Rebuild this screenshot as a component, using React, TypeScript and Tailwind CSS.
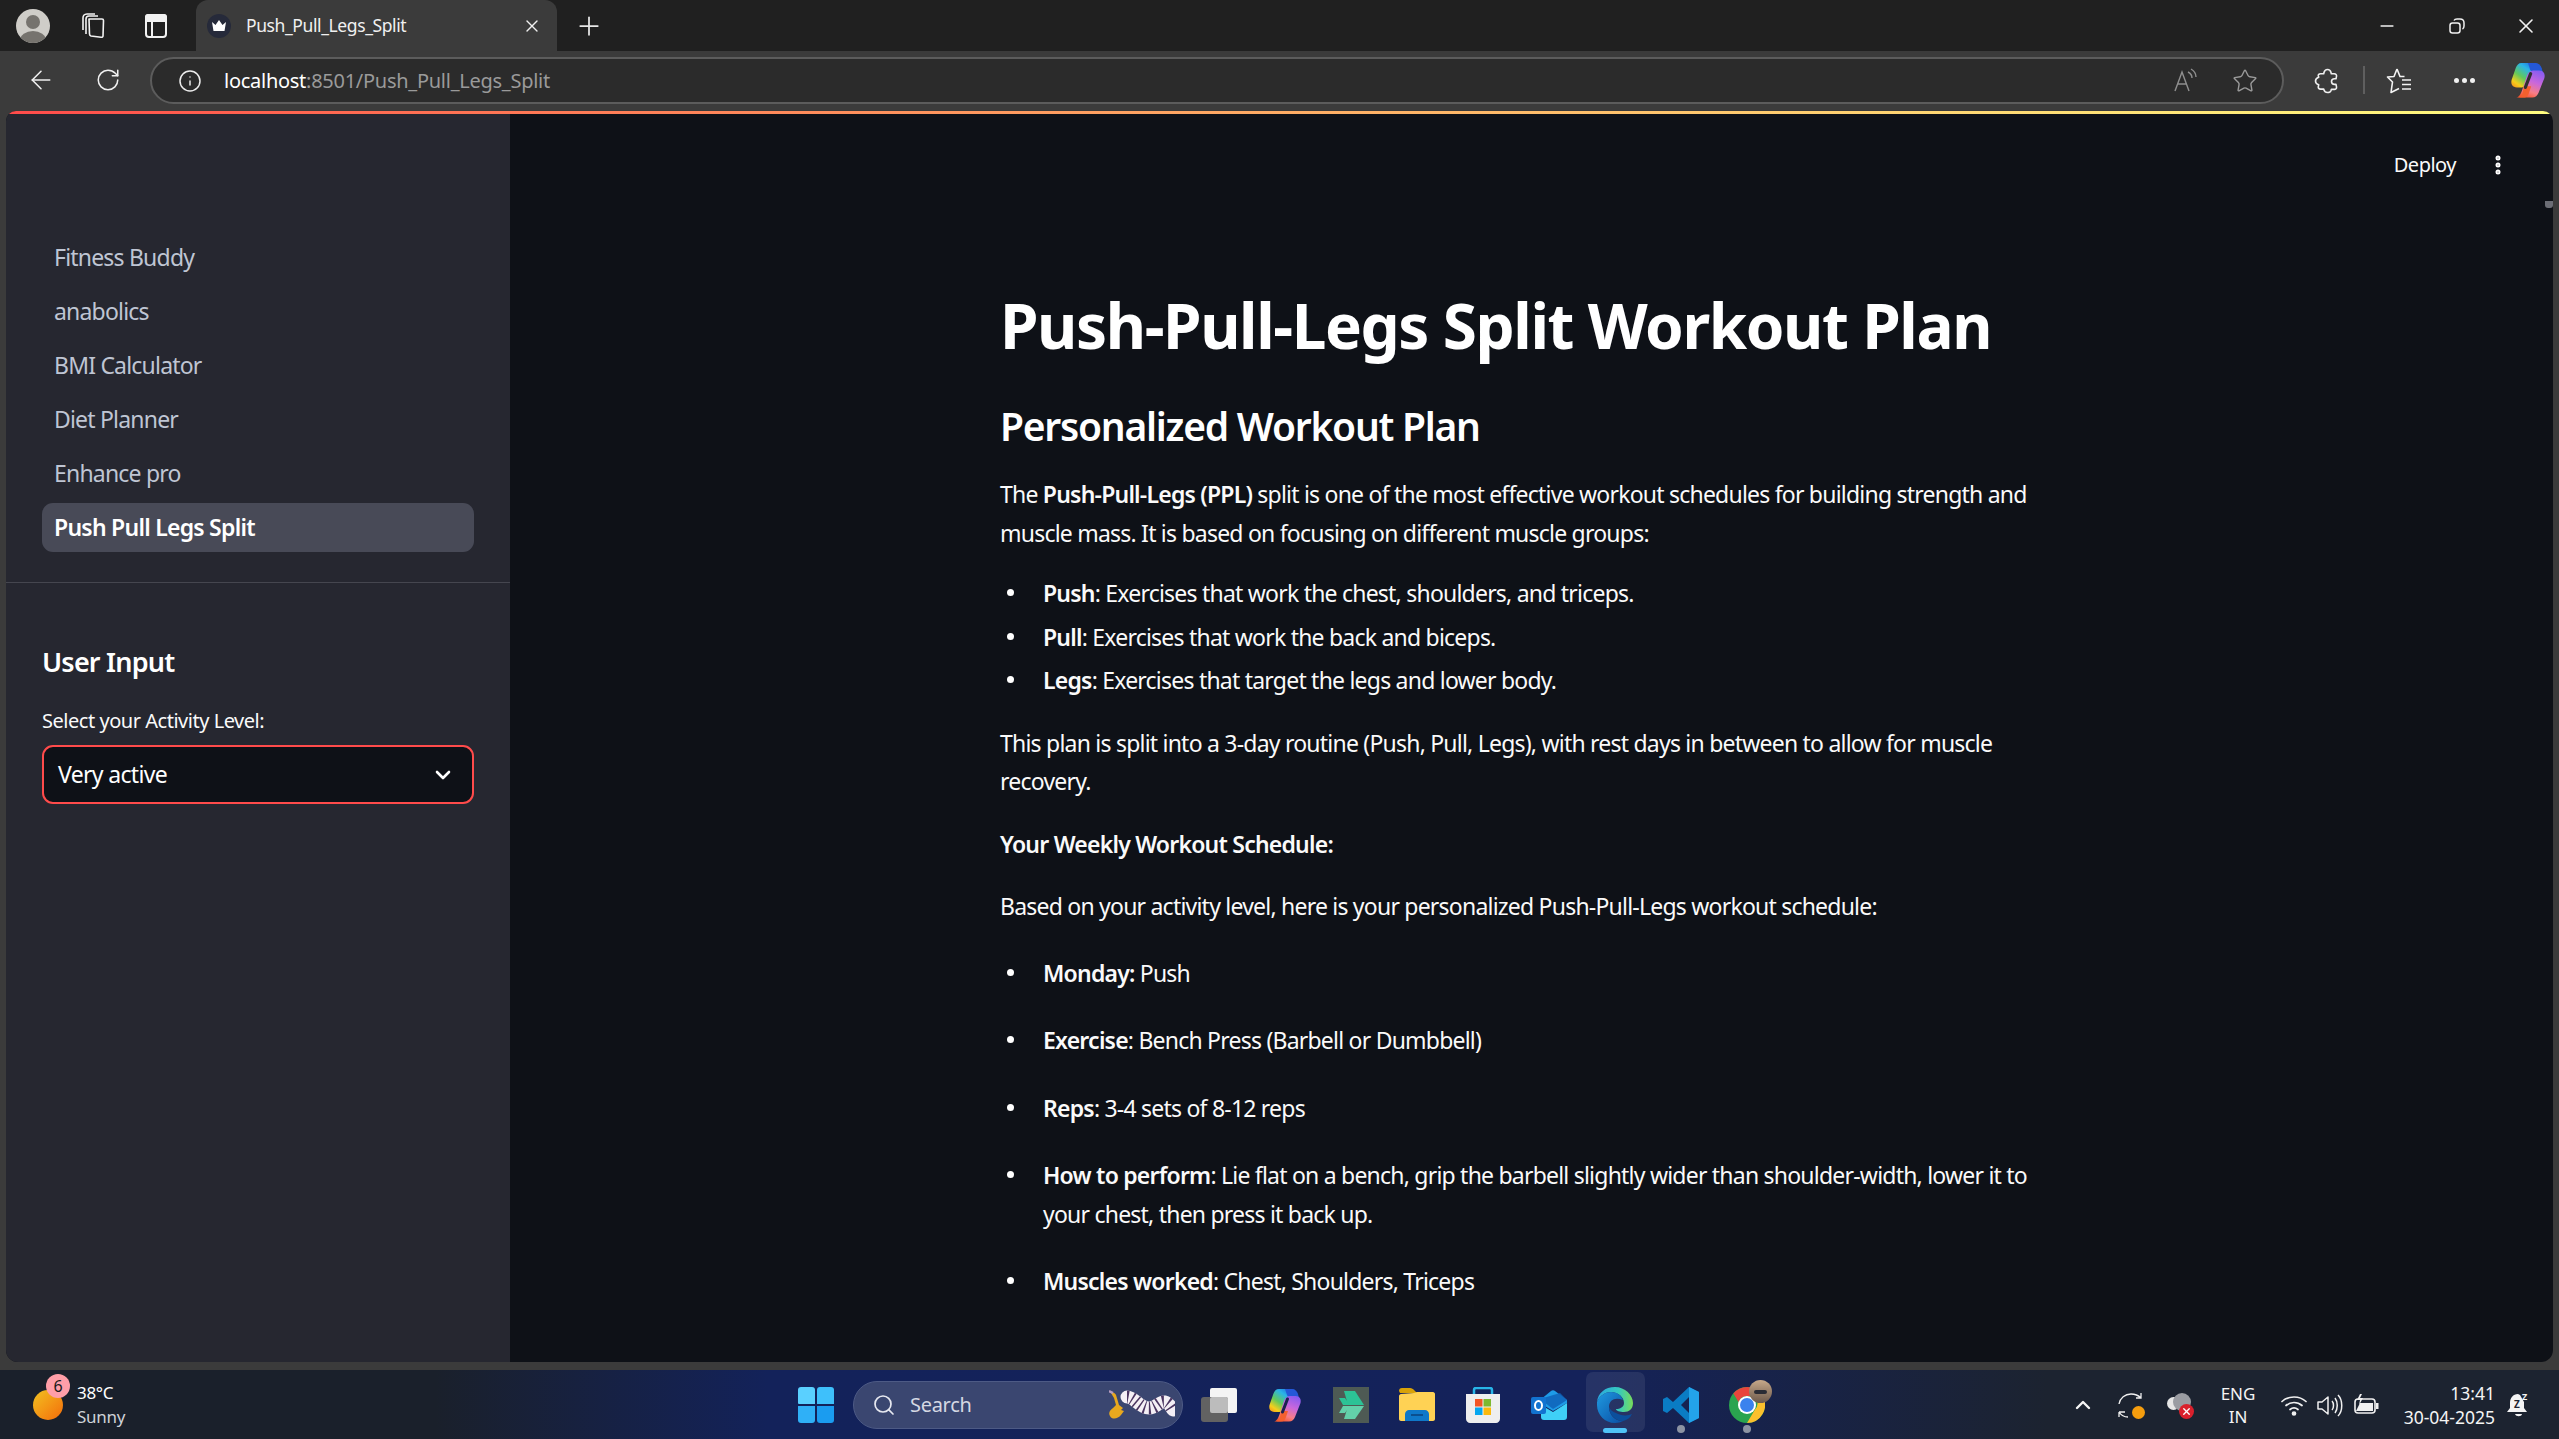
import React from "react";
import { ArrowLeft, RotateCw, Info, Star, Plus, X, Minus, ChevronDown, ChevronUp, Search, EllipsisVertical } from "lucide-react";

const nav = ["Fitness Buddy", "anabolics", "BMI Calculator", "Diet Planner", "Enhance pro"];

function Bullet({ children, cls = "" }: { children: React.ReactNode; cls?: string }) {
  return (
    <li className={"flex " + cls}>
      <span className="w-[43px] shrink-0 pl-[7px] pt-[15px]">
        <span className="block h-[7px] w-[7px] rounded-full bg-white" />
      </span>
      <span className="block">{children}</span>
    </li>
  );
}

function Copilot({ size = 34, id, slit = "#303030" }: { size?: number; id: string; slit?: string }) {
  return (
    <svg width={size} height={size} viewBox="0 0 34 34">
      <defs>
        <linearGradient id={id + "a"} x1="0.9" y1="0" x2="0.1" y2="1">
          <stop offset="0" stopColor="#1f5fd8" />
          <stop offset="0.3" stopColor="#2ab4e8" />
          <stop offset="0.6" stopColor="#62c95c" />
          <stop offset="0.85" stopColor="#f5cf1c" />
          <stop offset="1" stopColor="#f59a1c" />
        </linearGradient>
        <linearGradient id={id + "b"} x1="0.7" y1="0" x2="0.3" y2="1">
          <stop offset="0" stopColor="#8a5cf0" />
          <stop offset="0.4" stopColor="#c967dc" />
          <stop offset="0.75" stopColor="#f77e86" />
          <stop offset="1" stopColor="#f8552e" />
        </linearGradient>
      </defs>
      <path d="M11 1C8 1 6.500 3 5.500 5.500L1.500 17C.5 21 2.500 24 6.500 24H11c3 0 5-2 6-5l4-12c1-3 2.500-6 6-6z" fill={`url(#${id}a)`} />
      <path d="M17 1h7c3 0 5 2 6 5l1 4h-8c-2 0-3-1-4-3z" fill="#2458d8" />
      <path d="M21 33.500c3 0 5-2 6-4.500l5.500-14c1-4-1-7-5-7H22c-3 0-5 2-6 5l-4 12c-1 3-3 8.500-6 8.500z" fill={`url(#${id}b)`} />
      <path d="M13 23h7l-2 6c-.8 2.500-2 4.500-5 4.500H7c3 0 4.500-2 5-4.500z" fill="#f4602e" />
      <path d="M19.500 11L14.500 24" stroke={slit} strokeWidth="3" strokeLinecap="round" />
    </svg>
  );
}

function Tb({ children, cls = "" }: { children?: React.ReactNode; cls?: string }) {
  return <div className={"relative flex h-[59px] w-[66px] shrink-0 items-center justify-center " + cls}>{children}</div>;
}

export default function App() {
  return (
    <div className="flex h-[1439px] w-[2559px] flex-col overflow-hidden bg-[#3b3b3b] text-white" style={{ fontFamily: '"Noto Sans", sans-serif' }}>
      {/* Tab strip */}
      <div className="flex h-[51px] shrink-0 items-center bg-[#202020]">
        <div className="ml-[16px] flex h-[34px] w-[34px] items-end justify-center overflow-hidden rounded-full bg-[#cfcdc8]">
          <svg width="34" height="34" viewBox="0 0 34 34"><circle cx="17" cy="13" r="7" fill="#76736e" /><ellipse cx="17" cy="31" rx="13" ry="9" fill="#76736e" /></svg>
        </div>
        <div className="ml-[26px] flex w-[34px] justify-center">
          <svg width="24" height="26" viewBox="0 0 24 26" fill="none" stroke="#f2f2f2" strokeWidth="1.6" strokeLinejoin="round"><path d="M8 6l13 0c1 0 1.500 .5 1.500 1.500L22 23c0 1-1 1.500-2 1.200L10 23c-1-.3-1.500-1-1.500-2z" /><path d="M5 21L5 6c0-2 1-3 3-3h9" /><path d="M2 17V5c0-2 1-4 4-4h8" /></svg>
        </div>
        <div className="ml-[29px] flex w-[34px] justify-center">
          <svg width="22" height="24" viewBox="0 0 22 24" fill="none" stroke="#f2f2f2" strokeWidth="2"><rect x="1" y="1" width="20" height="22" rx="3" /><path d="M1 7h20M7 7v16" /><rect x="1" y="1" width="20" height="6" fill="#f2f2f2" rx="2" /></svg>
        </div>
        <div className="ml-[23px] flex h-[51px] w-[361px] items-center rounded-t-[12px] bg-[#3b3b3b] pl-[11px] pr-[15px]">
          <div className="flex h-[24px] w-[24px] items-center justify-center rounded-full bg-[#262a3a]">
            <svg width="16" height="13" viewBox="0 0 16 13" fill="#fff"><path d="M1 3l3.500 3L8 1l3.500 5L15 3l-1.500 9h-11z" /></svg>
          </div>
          <span className="ml-[15px] flex-1 text-[17.5px] tracking-[-0.4px] text-[#f0f0f0]">Push_Pull_Legs_Split</span>
          <X size={20} strokeWidth={1.6} className="text-[#f0f0f0]" />
        </div>
        <Plus size={30} strokeWidth={1.4} className="ml-[17px] text-[#e8e8e8]" />
        <div className="flex-1" />
        <Minus size={20} strokeWidth={2} className="text-[#f0f0f0]" />
        <div className="ml-[50px] flex w-[20px] justify-center">
          <svg width="16" height="16" viewBox="0 0 16 16" fill="none" stroke="#f0f0f0" strokeWidth="1.5"><rect x="1" y="5" width="10" height="10" rx="2.500" /><path d="M5 2.500C5.500 1.500 6.500 1 8 1h3c2.500 0 4 1.500 4 4v3c0 1.500-.5 2.500-1.500 3" /></svg>
        </div>
        <X size={24} strokeWidth={1.6} className="ml-[47px] mr-[21px] text-[#f0f0f0]" />
      </div>

      {/* Toolbar */}
      <div className="flex h-[60px] shrink-0 items-start bg-[#3b3b3b] pt-[6px]">
        <ArrowLeft size={30} strokeWidth={1.25} className="ml-[26px] mt-[8px] text-[#f0f0f0]" />
        <RotateCw size={26} strokeWidth={1.4} className="ml-[39px] mt-[10px] text-[#f0f0f0]" />
        <div className="ml-[29px] flex h-[47px] w-[2134px] items-center rounded-full border-2 border-[#5c5c5c] bg-[#2b2b2b] pl-[26px] pr-[24px]">
          <Info size={24} strokeWidth={1.5} className="text-[#ededed]" />
          <span className="ml-[22px] flex-1 text-[20px] tracking-[-0.27px]"><span className="text-white">localhost</span><span className="text-[#9a9a9a]">:8501/Push_Pull_Legs_Split</span></span>
          <svg width="26" height="26" viewBox="0 0 26 26" fill="none" stroke="#8f8f8f" strokeWidth="1.400"><path d="M2 23L9 4l7 19M5 16h9" /><path d="M15 4c3 1.500 4 4 4 6M18 1c3.500 2 5 5 5 8" /></svg>
          <Star size={26} strokeWidth={1.3} className="ml-[33px] text-[#9a9a9a]" />
        </div>
        <div className="ml-[30px] mt-[11px]">
          <svg width="26" height="26" viewBox="0 0 26 26" fill="none" stroke="#f0f0f0" strokeWidth="1.600" strokeLinejoin="round"><path d="M10 4.500C10.500 2.500 11.800 1.500 13.500 1.500s3 1 3.500 3l.3 1.300h3c1.500 0 2.500 1 2.200 2.500l-.5 2.500h-1.500c-1.800 0-3 1.200-3 2.800s1.200 2.800 3 2.800H22l.5 2.500c.3 1.500-.7 2.500-2.200 2.500h-3l-.3 1C16.500 23.800 15 24.500 13.500 24.500s-3-.8-3.500-2.400l-.3-1H6.500c-1.500 0-2.500-1-2.200-2.500l.4-1.800C3 16.300 1.500 15 1.500 13s1.500-3.300 3.200-3.800l-.4-1.400C4 6.500 5 5.800 6.500 5.800h3.200z" /></svg>
        </div>
        <div className="ml-[23px] mt-[9px] h-[28px] w-[2px] bg-[#5f5f5f]" />
        <div className="ml-[21px] mt-[10px]">
          <svg width="26" height="28" viewBox="0 0 26 28" fill="none" stroke="#f4f4f4" strokeWidth="1.600" strokeLinejoin="round"><path d="M11 2l3 7.500h4.500M11 2L8 9.500 1.500 10l5 5L5 25.500l8-4" /><path d="M16 13h9M16 17.500h9M16 22h9" /></svg>
        </div>
        <div className="ml-[42px] mt-[21px] flex w-[21px] justify-between">
          <div className="h-[5px] w-[5px] rounded-full bg-[#f0f0f0]" />
          <div className="h-[5px] w-[5px] rounded-full bg-[#f0f0f0]" />
          <div className="h-[5px] w-[5px] rounded-full bg-[#f0f0f0]" />
        </div>
        <div className="ml-[35px] mt-[5px]"><Copilot id="cp1" size={36} /></div>
      </div>

      {/* Page */}
      <div className="mx-[6px] flex h-[1251px] shrink-0 flex-col overflow-hidden rounded-t-[10px] rounded-b-[12px] bg-[#0e1117]">
        <div className="h-[3px] shrink-0 bg-gradient-to-r from-[#ff4b4b] to-[#fffd80]" />
        <div className="flex min-h-0 flex-1">
          {/* Sidebar */}
          <aside className="flex w-[504px] shrink-0 flex-col bg-[#262730] pt-[119px] text-[23px]">
            <nav className="flex flex-col gap-[5px] px-[36px]">
              {nav.map((n) => (
                <div key={n} className="flex h-[49px] items-center px-[12px] tracking-[-0.8px] text-[#bfc5d3]">{n}</div>
              ))}
              <div className="flex h-[49px] items-center rounded-[11px] bg-[#484a57] px-[12px] font-semibold tracking-[-0.75px] text-white">Push Pull Legs Split</div>
            </nav>
            <div className="mt-[30px] h-[1px] bg-[#45464f]" />
            <h3 className="ml-[36px] mt-[59px] text-[27px] leading-[40px] font-semibold tracking-[-0.8px]">User Input</h3>
            <label className="ml-[36px] mt-[24px] text-[20px] leading-[30px] tracking-[-0.47px] text-[#fafafa]">Select your Activity Level:</label>
            <div className="mx-[36px] mt-[9px] flex h-[59px] items-center justify-between rounded-[11px] border-2 border-[#ff4b4b] bg-[#0e1117] pl-[14px] pr-[17px]">
              <span className="tracking-[-0.67px]">Very active</span>
              <ChevronDown size={24} strokeWidth={2.6} />
            </div>
          </aside>

          {/* Main */}
          <main className="relative min-w-0 flex-1 overflow-hidden">
            <div className="absolute right-[43px] top-[36px] flex items-center gap-[30px]">
              <span className="text-[20px] tracking-[-0.5px] text-[#fafafa]">Deploy</span>
              <EllipsisVertical size={24} strokeWidth={3} />
            </div>
            <div className="absolute right-0 top-[87px] h-[7px] w-[8px] rounded-b-[3px] bg-[#6b6d75]" />

            <div className="ml-[490px] w-[1040px] pt-[168px] text-[23px] leading-[38.5px] tracking-[-0.78px] text-[#fafafa] [&_b]:font-semibold">
              <h1 className="text-[62px] leading-[86px] font-bold tracking-[-1.4px] text-white">Push-Pull-Legs Split Workout Plan</h1>
              <h2 className="mt-[31px] text-[39px] leading-[54px] font-semibold tracking-[-1.25px] text-white">Personalized Workout Plan</h2>
              <p className="mt-[22px]">The <b>Push-Pull-Legs (PPL)</b> split is one of the most effective workout schedules for building strength and muscle mass. It is based on focusing on different muscle groups:</p>
              <ul className="mt-[22px] flex flex-col gap-[5px]">
                <Bullet><b>Push</b>: Exercises that work the chest, shoulders, and triceps.</Bullet>
                <Bullet><b>Pull</b>: Exercises that work the back and biceps.</Bullet>
                <Bullet><b>Legs</b>: Exercises that target the legs and lower body.</Bullet>
              </ul>
              <p className="mt-[24px]">This plan is split into a 3-day routine (Push, Pull, Legs), with rest days in between to allow for muscle recovery.</p>
              <p className="mt-[24px] font-semibold">Your Weekly Workout Schedule:</p>
              <p className="mt-[24px]">Based on your activity level, here is your personalized Push-Pull-Legs workout schedule:</p>
              <ul className="mt-[28px] flex flex-col gap-[29px]">
                <Bullet><b>Monday:</b> Push</Bullet>
                <Bullet><b>Exercise</b>: Bench Press (Barbell or Dumbbell)</Bullet>
                <Bullet><b>Reps</b>: 3-4 sets of 8-12 reps</Bullet>
                <Bullet><b>How to perform</b>: Lie flat on a bench, grip the barbell slightly wider than shoulder-width, lower it to your chest, then press it back up.</Bullet>
                <Bullet><b>Muscles worked</b>: Chest, Shoulders, Triceps</Bullet>
              </ul>
            </div>
          </main>
        </div>
      </div>

      {/* Taskbar */}
      <div className="mt-[8px] flex h-[69px] shrink-0 items-center bg-[linear-gradient(90deg,#1a202b_17%,#13225a_30%,#14225a_62%,#1c2330_80%)]">
        <div className="relative ml-[33px] h-[30px] w-[30px] rounded-full bg-gradient-to-br from-[#f0c020] to-[#f26a0a]">
          <div className="absolute left-[13px] top-[-16px] flex h-[24px] w-[24px] items-center justify-center rounded-full bg-[#ff9ea8] text-[16px] text-[#1a1a1a]">6</div>
        </div>
        <div className="ml-[14px] flex w-[61px] flex-col text-[17px] leading-[24px] tracking-[-0.3px]">
          <span className="text-white">38°C</span>
          <span className="text-[#cfd2d8]">Sunny</span>
        </div>
        <div className="ml-[660px] flex h-[36px] w-[36px] flex-wrap content-between justify-between">
          <div className="h-[17px] w-[17px] rounded-t-[3px] rounded-bl-[1px] bg-[#5ad0ff]" />
          <div className="h-[17px] w-[17px] rounded-t-[3px] bg-[#3ec0fb]" />
          <div className="h-[17px] w-[17px] rounded-b-[3px] bg-[#2fb0f7]" />
          <div className="h-[17px] w-[17px] rounded-b-[3px] bg-[#1a9cf0]" />
        </div>
        <div className="ml-[19px] flex h-[48px] w-[330px] items-center rounded-full border border-[#4d5a85] bg-[#3a4670] pl-[18px] pr-[7px]">
          <Search size={24} strokeWidth={1.7} className="text-[#e6e8f0]" />
          <span className="ml-[14px] flex-1 text-[20px] tracking-[-0.3px] text-[#d5d8e3]">Search</span>
          <svg width="66" height="34" viewBox="0 0 66 34">
            <path d="M2 5c2-1 4 0 5 2l3 10 4 3-2 2 3 1-3 4c-3 4-9 5-11 1-2-3 0-6 3-8l3-3-2-7z" fill="#e8a81e" />
            <path d="M0 3l4 2" stroke="#b79cc0" strokeWidth="2.500" />
            <path d="M18 9C26 9 30 20 40 20C48 20 50 13 56 14C60 15 62 19 64 22" fill="none" stroke="#f4eff5" strokeWidth="13" strokeLinecap="round" />
            <path d="M18 9C26 9 30 20 40 20C48 20 50 13 56 14C60 15 62 19 64 22" fill="none" stroke="#4b3561" strokeWidth="13" strokeDasharray="1.500 3.500" />
          </svg>
        </div>
        <div className="ml-[3px] flex items-center">
          <Tb>
            <svg width="37" height="34" viewBox="0 0 37 34"><rect x="9" y="0" width="27" height="25" rx="2" fill="#f4f4f4" /><rect x="0" y="9" width="27" height="25" rx="3" fill="#626262" /><rect x="9" y="9" width="18" height="16" rx="2" fill="#bcbcbc" /></svg>
          </Tb>
          <Tb><Copilot id="cp2" size={34} slit="#1a2250" /></Tb>
          <Tb>
            <svg width="36" height="36" viewBox="0 0 36 36"><rect width="36" height="36" fill="#4e5a54" /><path d="M11 4h11l9 14H15z" fill="#2cc296" /><path d="M15 19h16l-9 13H11z" fill="#63d0aa" /><path d="M6 11h6l5 7h-7z" fill="#2cc296" /><path d="M10 19h7l-5 7H6z" fill="#63d0aa" /></svg>
          </Tb>
          <Tb>
            <svg width="36" height="33" viewBox="0 0 36 33"><path d="M0 3c0-2 1-3 3-3h8c2 0 3 1 4 2l3 3H1z" fill="#d9a208" /><path d="M0 8c0-1 1-2 2-2l13-1c1 0 2-1 3-1h16c1 0 2 1 2 2v25c0 1-1 2-2 2H2c-1 0-2-1-2-2z" fill="#ffd254" /><path d="M6 33v-7c0-2 2-4 4-4h16c2 0 4 2 4 4v7z" fill="#0f78c9" /><rect x="12" y="26" width="12" height="2" fill="#0b4f8f" /></svg>
          </Tb>
          <Tb>
            <svg width="36" height="36" viewBox="0 0 36 36"><path d="M9 8V3c0-1 .5-2 2-2h14c1.500 0 2 1 2 2v5" fill="none" stroke="#27b5e8" strokeWidth="2.500" /><path d="M1 7h34v25c0 2-2 4-4 4H5c-2 0-4-2-4-4z" fill="#eeeeee" /><rect x="10" y="12" width="7.500" height="7.500" fill="#f25525" /><rect x="18.500" y="12" width="7.500" height="7.500" fill="#7db92f" /><rect x="10" y="20.500" width="7.500" height="7.500" fill="#05a6f0" /><rect x="18.500" y="20.500" width="7.500" height="7.500" fill="#fbb90d" /></svg>
          </Tb>
          <Tb>
            <svg width="36" height="30" viewBox="0 0 36 30"><path d="M9 10L20 1c1-1 3-1 4 0l12 9v3L22 21 9 13z" fill="#1e9be8" /><path d="M9 9l20-6 7 7-14 9z" fill="#0f63b8" opacity=".85" /><path d="M10 15l12 7 14-9v14c0 2-1 3-3 3H13c-2 0-3-1-3-3z" fill="#3fd0f7" /><rect x="0" y="7" width="15" height="17" rx="2" fill="#1273d0" /><ellipse cx="7.500" cy="15.500" rx="3.500" ry="4.500" fill="none" stroke="#fff" strokeWidth="2" /></svg>
          </Tb>
          <Tb cls="z-0">
            <div className="absolute left-[4px] top-[-3px] -z-10 h-[60px] w-[59px] rounded-[7px] bg-[#ffffff14]" />
            <svg width="36" height="36" viewBox="0 0 36 36">
              <defs>
                <linearGradient id="eg1" x1="0" y1="0.5" x2="1" y2="0.5"><stop offset="0" stopColor="#2aa7e0" /><stop offset="0.6" stopColor="#35c9bf" /><stop offset="1" stopColor="#78dc5a" /></linearGradient>
                <linearGradient id="eg2" x1="0" y1="0" x2="1" y2="1"><stop offset="0" stopColor="#1f9ae0" /><stop offset="1" stopColor="#0a4fa5" /></linearGradient>
              </defs>
              <path d="M18 0c10 0 18 8 18 16 0 6-4 9-9 9-4 0-8-1-8-3 4 0 8-2 8-6 0-6-6-11-13-11C9 5 3 8 0 15 1 6 8 0 18 0z" fill="url(#eg1)" />
              <path d="M0 15C3 8 9 5 14 5c6 0 10 3 12 8-7-3-14-1-14 7 0 8 6 14 14 14-2 1-5 2-8 2C8 36 0 28 0 18z" fill="url(#eg2)" />
              <path d="M12 20c0 8 7 14 14 14 4-1 7-3 9-7-4 2-11 2-16-1-3-1-6-3-7-6z" fill="#0b4f9c" />
            </svg>
            <div className="absolute bottom-[1px] left-[21px] h-[5px] w-[24px] rounded-full bg-[#4fc3f7]" />
          </Tb>
          <Tb>
            <svg width="36" height="36" viewBox="0 0 36 36"><path d="M26 0l10 5v26l-10 5-16-15-6 5-4-2V12l4-2 6 5zm0 10l-8 8 8 8z" fill="#0a7cc4" /><path d="M26 0l10 5v26l-10 5z" fill="#23a3ea" /></svg>
            <div className="absolute bottom-[1px] left-[29px] h-[8px] w-[8px] rounded-full bg-[#8c93a3]" />
          </Tb>
          <Tb>
            <svg width="36" height="36" viewBox="0 0 36 36"><circle cx="18" cy="18" r="18" fill="#2aa44f" /><path d="M18 0a18 18 0 0 1 15.600 9H18a9 9 0 0 0-8.500 6L4.400 6.500A18 18 0 0 1 18 0z" fill="#e8453c" /><path d="M33.600 9A18 18 0 0 1 18 36l8-13.500a9 9 0 0 0-1-13.500z" fill="#fbc02d" /><circle cx="18" cy="18" r="9" fill="#fff" /><circle cx="18" cy="18" r="7" fill="#3b82ee" /></svg>
            <div className="absolute right-[8px] top-[5px] h-[23px] w-[23px] overflow-hidden rounded-full bg-gradient-to-b from-[#c7a98a] to-[#6d5a4c]"><div className="ml-[5px] mt-[10px] h-[4px] w-[13px] rounded-[2px] bg-[#2a2c35]" /></div>
            <div className="absolute bottom-[1px] left-[29px] h-[8px] w-[8px] rounded-full bg-[#8c93a3]" />
          </Tb>
        </div>
        <div className="flex-1" />
        <ChevronUp size={24} strokeWidth={2.4} className="text-[#f4f4f4]" />
        <div className="relative ml-[22px] flex w-[28px] justify-center">
          <svg width="26" height="26" viewBox="0 0 26 26" fill="none" stroke="#f0f0f0" strokeWidth="1.300"><path d="M1 12C2 6 7 2 13 2c4 0 7 1 10 4M23 1v5h-5" /><path d="M1 20h6M1 20v5M1 20c2 3 6 5 9 5" /></svg>
          <div className="absolute bottom-[-1px] right-[0px] h-[13px] w-[13px] rounded-full bg-[#f59d0e]" />
        </div>
        <div className="relative ml-[22px] h-[24px] w-[26px]">
          <div className="absolute left-0 top-[4px] h-[13px] w-[13px] rounded-full bg-[#e6e6e6]" />
          <div className="absolute left-[6px] top-0 h-[18px] w-[18px] rounded-full bg-[#9a9ca2]" />
          <div className="absolute bottom-[-2px] right-[-1px] flex h-[15px] w-[15px] items-center justify-center rounded-full bg-[#d9202c]"><X size={11} strokeWidth={3} /></div>
        </div>
        <div className="ml-[21px] flex w-[48px] flex-col items-center text-[17px] leading-[23px] text-[#f4f4f4]"><span>ENG</span><span>IN</span></div>
        <div className="ml-[19px]">
          <svg width="26" height="22" viewBox="0 0 26 22" fill="none" stroke="#f0f0f0" strokeWidth="1.700" strokeLinecap="round"><path d="M1 7.500c6.500-6 17.500-6 24 0" /><path d="M5 11.500c4.500-4 11.500-4 16 0" /><path d="M9 15.500c2.500-2 5.500-2 8 0" /><circle cx="13" cy="19.500" r="1.500" fill="#f0f0f0" /></svg>
        </div>
        <div className="ml-[10px]">
          <svg width="26" height="26" viewBox="0 0 26 26" fill="none" stroke="#f0f0f0" strokeWidth="1.500"><path d="M1 10h4l6-5v17l-6-5H1z" strokeLinejoin="round" /><path d="M15 9c2 2 2 7 0 9M18 6c3 4 3 11 0 15M21 3c5 5 5 16 0 21" /></svg>
        </div>
        <div className="ml-[10px]">
          <svg width="26" height="24" viewBox="0 0 26 24"><rect x="2" y="6" width="20" height="14" rx="3" fill="none" stroke="#f0f0f0" strokeWidth="1.600" /><path d="M3 18l4-8h13v8z" fill="#f0f0f0" /><rect x="23" y="10" width="2.500" height="6" fill="#f0f0f0" /><path d="M7 1L4 7h3l-1 5 4-7H7l2-4z" fill="#f0f0f0" /></svg>
        </div>
        <div className="ml-[11px] flex w-[105px] flex-col items-end text-[17.500px] leading-[24px] text-[#f4f4f4]"><span>13:41</span><span>30-04-2025</span></div>
        <div className="ml-[12px] mr-[28px]">
          <svg width="24" height="28" viewBox="0 0 24 28" fill="#f4f4f4"><path d="M11 3c-5 0-8 4-8 9v5l-3 4h20l-3-4v-6l-4-7z" /><path d="M8 23h7c-.5 3-6 3-7 0z" /><text x="7" y="17" fontSize="10" fontWeight="700" fill="#1c2330" fontFamily="Noto Sans">Z</text><text x="15" y="9" fontSize="9" fontWeight="700" fill="#f4f4f4" fontFamily="Noto Sans">Z</text></svg>
        </div>
      </div>
    </div>
  );
}
